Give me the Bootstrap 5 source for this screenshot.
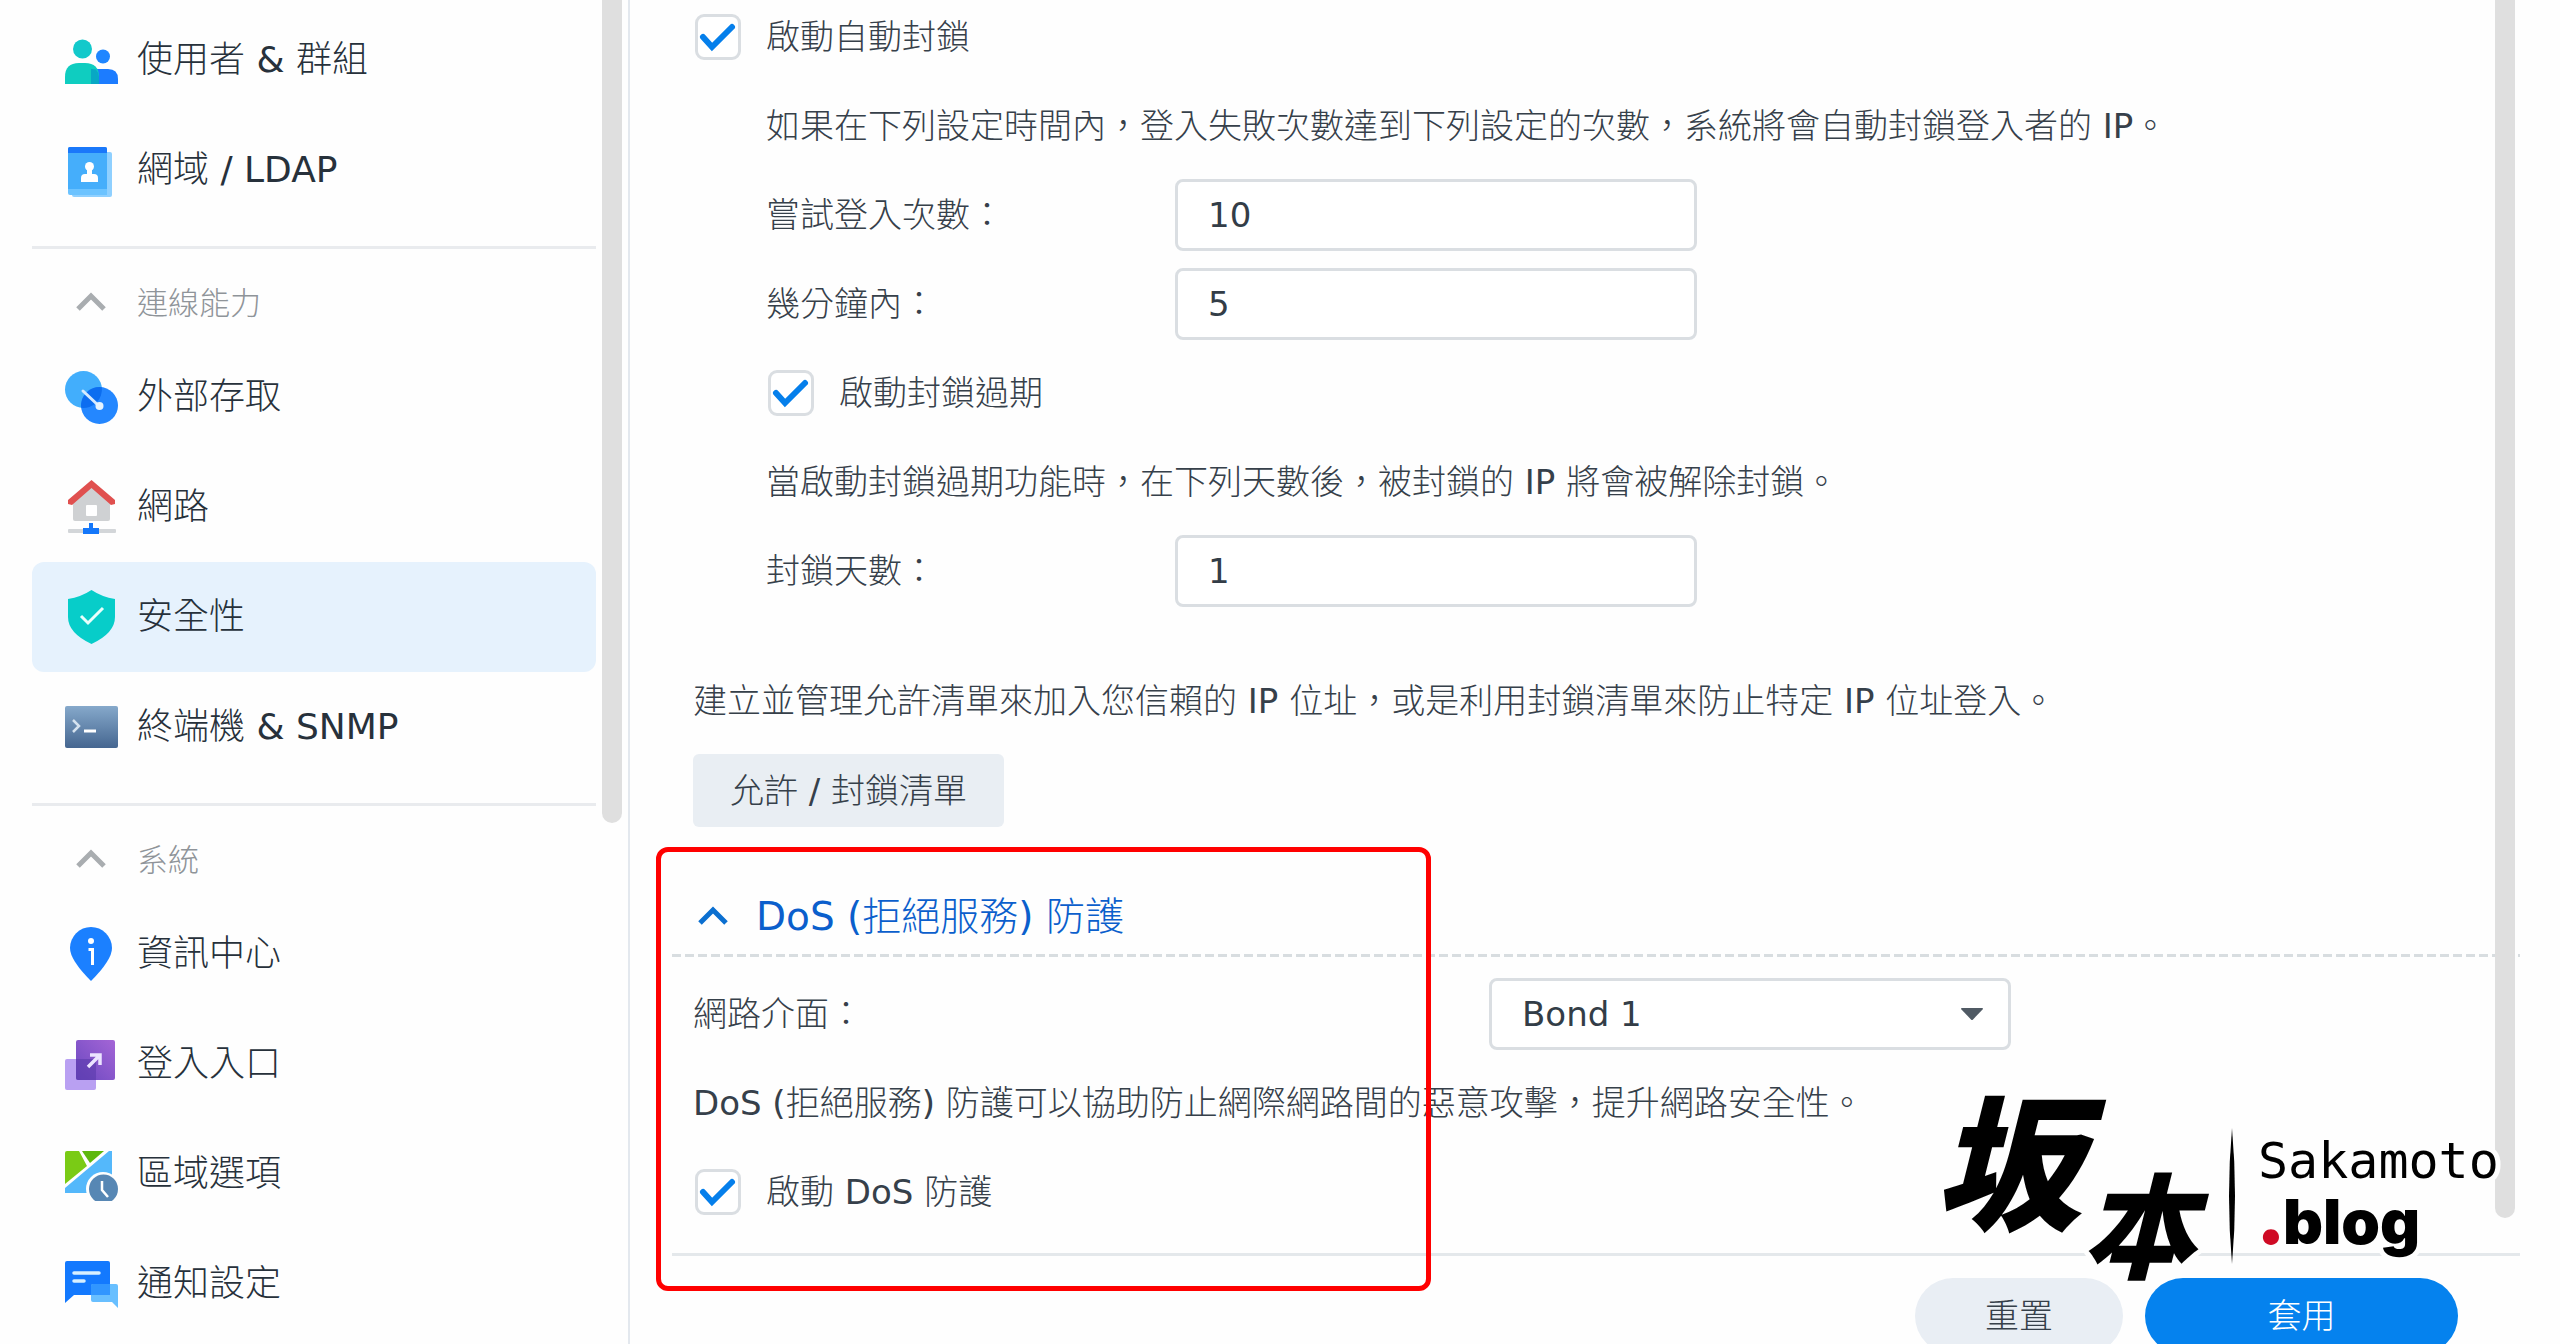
<!DOCTYPE html>
<html lang="zh-Hant">
<head>
<meta charset="utf-8">
<meta name="viewport" content="width=device-width, initial-scale=1">
<title>控制台 - 安全性</title>
<link href="https://cdn.jsdelivr.net/npm/bootstrap@5.3.0/dist/css/bootstrap.min.css" rel="stylesheet">
<style>
  body { font-family: "DejaVu Sans", "Noto Sans CJK TC", sans-serif; font-size: 34px; line-height: 48px; color: #36404a; background: #fefefe; }
  .cjk-light, .cjk-light button { font-weight: 300; }

  /* sidebar */
  .side { width: 630px; border-right: 2px solid #e3e8ee; padding: 5px 32px 0; }
  .side-link { height: 110px; padding-left: 32px; gap: 19px; border-radius: 12px; color: #27313b; font-size: 36px; text-decoration: none; }
  .side-link svg { width: 54px; height: 54px; flex: none; }
  .side-link.active { background: #e6f2fd; }
  .side-sep { height: 3px; margin: 21px 0 0; background: #e9ebee; }
  .side-group { height: 93px; padding: 14px 0 0 32px; gap: 19px; font-size: 31px; color: #8f9499; background: none; border: 0; }
  .side-group svg { width: 54px; height: 54px; flex: none; }
  .thumb { background: #dfdfdf; width: 20px; top: 0; }
  .thumb-side { right: 6px; height: 823px; border-radius: 0 0 10px 10px; }
  .thumb-main { right: 45px; height: 1218px; border-radius: 0 0 10px 10px; }

  /* settings pane */
  .pane { padding: 1px 40px 0 42px; }
  .block-pad { padding-left: 21px; }
  .indent { padding-left: 73px; }
  .stack { gap: 17px; }
  .line { height: 72px; gap: 25px; }
  .line-label { width: 409px; }
  .line-label-wide { width: 796px; }
  .field { width: 522px; height: 72px; border: 3px solid #dadee2; border-radius: 8px; padding: 0 30px; font-size: 34px; font-weight: 400; color: #333d47; background-color: #fff; }
  .field-select { appearance: none; background: #fff url("data:image/svg+xml,%3Csvg xmlns='http://www.w3.org/2000/svg' viewBox='0 0 22 12'%3E%3Cpath d='M1 0h20a1 1 0 0 1 .6 1.6L12 11.400a1.400 1.400 0 0 1-2 0L.4 1.600A1 1 0 0 1 1 0z' fill='%23505a64'/%3E%3C/svg%3E") no-repeat right 25px center / 22px 12px; }
  .tick { appearance: none; width: 46px; height: 46px; flex: none; margin: 0 0 0 2px; border: 3px solid #dadee2; border-radius: 9px; background: #fff; }
  .tick:checked { background: #fff url("data:image/svg+xml,%3Csvg xmlns='http://www.w3.org/2000/svg' viewBox='0 0 40 40'%3E%3Cpath d='M5 20l9 10L34 10' fill='none' stroke='%23057feb' stroke-width='6' stroke-linecap='round'/%3E%3C/svg%3E") center / 40px 40px no-repeat; }
  .list-row { margin-top: 58px; }
  .btn-list { height: 73px; padding: 0 37px; border: 0; border-radius: 6px; background: #e9eef3; color: #36404a; font-size: 34px; }
  .dos-part { margin-top: 53px; }
  .dos-body { padding-top: 21px; padding-bottom: 25px; }
  .dos-head { height: 74px; gap: 26px; padding: 0 0 0 24px; border: 0; background: none; color: #0b5fcc; font-size: 39px; }
  .dash-rule { height: 3px; background: repeating-linear-gradient(90deg, #d8dde0 0 9px, transparent 9px 13px); }
  .marker-box { left: -16px; top: -33px; bottom: -38px; width: 775px; border: 5px solid #f00; border-radius: 12px; pointer-events: none; }
  .foot { border-top: 3px solid #e4e8eb; padding: 22px 62px 0 0; gap: 22px; }
  .pill { height: 76px; border: 0; border-radius: 38px; font-size: 34px; }
  .pill-reset { width: 208px; background: #e9eef4; color: #36404a; }
  .pill-apply { width: 313px; background: #0582ee; color: #fff; }

  /* watermark */
  .stamp { right: 30px; bottom: 0; width: 600px; height: 344px; pointer-events: none; }
  .stamp text { paint-order: stroke; stroke: #fefefe; stroke-width: 10px; stroke-linejoin: round; }
</style>
<script src="https://cdn.jsdelivr.net/npm/bootstrap@5.3.0/dist/js/bootstrap.bundle.min.js"></script>
</head>
<body class="cjk-light vh-100 overflow-hidden position-relative d-flex">

<nav class="side position-relative flex-shrink-0 vh-100 overflow-hidden">
  <a href="#" class="side-link d-flex align-items-center">
    <svg viewBox="0 0 54 54"><circle cx="39" cy="23.500" r="7" fill="#1f86ff"/><path d="M26 51V41q0-5 6-5h12q10 0 10 10v5z" fill="#1c7cff"/><circle cx="18.500" cy="16" r="9.500" fill="#12c9cb"/><path d="M1 51v-7q0-14 14-14h6q14 0 14 14v7z" fill="#0fcdc0"/><path d="M27 51V36q3 0 5 .5 3 3.500 3 7.500v7z" fill="#08a8c4"/></svg>
    <span>使用者 <span class="fw-normal">&amp;</span> 群組</span></a>
  <a href="#" class="side-link d-flex align-items-center">
    <svg viewBox="0 0 54 54"><rect x="8" y="9" width="40" height="45" rx="2" fill="#8fd0ff"/><rect x="4" y="4" width="39" height="46" rx="2" fill="#45aefb"/><path d="M4 46h39v6H6a2 2 0 0 1-2-2z" fill="#6cc3ff"/><path d="M6 4h35a2 2 0 0 1 2 2v4H4V6a2 2 0 0 1 2-2z" fill="#1a78fa"/><circle cx="25.500" cy="23.500" r="4.500" fill="#fff"/><path d="M23 26h5v5h2q4 0 4 4v4H17v-4q0-4 4-4h2z" fill="#fff"/></svg>
    <span>網域 <span class="fw-normal">/ LDAP</span></span></a>

  <div class="side-sep"></div>
  <button type="button" class="side-group d-flex align-items-center w-100"><svg viewBox="0 0 54 54"><path d="M14 33l13-13 13 13" fill="none" stroke="#a9adb0" stroke-width="5"/></svg><span>連線能力</span></button>

  <a href="#" class="side-link d-flex align-items-center">
    <svg viewBox="0 0 54 54"><circle cx="19.500" cy="19.500" r="18.500" fill="#42aefc"/><circle cx="35.500" cy="35.500" r="18.500" fill="#2487ff"/><path d="M17.200 37.800A18.500 18.500 0 0 1 37.800 17.200 18.500 18.500 0 0 1 17.200 37.800z" fill="#0c6df0"/><path d="M19 21l16 15" stroke="#d6eaff" stroke-width="3" stroke-linecap="round"/><circle cx="35.500" cy="36" r="4" fill="#e6f3ff"/></svg>
    <span>外部存取</span></a>
  <a href="#" class="side-link d-flex align-items-center">
    <svg viewBox="0 0 54 54"><path d="M9 18L27 3l19 15v21q0 2-2 2H11q-2 0-2-2z" fill="#cfd1d3"/><path d="M4 20L27.500 0 51 20v4l-4 1L27.500 8 8 25l-4-1z" fill="#e0504f"/><rect x="22" y="25" width="11" height="11" rx="1" fill="#fff"/><rect x="4" y="49" width="48" height="4" rx="1" fill="#d3d6d9"/><path d="M25 43h4v5h6v6H19v-6h6z" fill="#1477fa"/></svg>
    <span>網路</span></a>
  <a href="#" class="side-link active d-flex align-items-center" aria-current="page">
    <svg viewBox="0 0 54 54"><path d="M27.500 0Q38 7 51 9v18q0 16-23.500 27Q4 43 4 27V9q13-2 23.500-9z" fill="#07cdc9"/><path d="M17 26l7 7 15-15" fill="none" stroke="#e8fffc" stroke-width="3"/></svg>
    <span>安全性</span></a>
  <a href="#" class="side-link d-flex align-items-center">
    <svg viewBox="0 0 54 54"><defs><linearGradient id="gTerm" x2="0" y2="1"><stop stop-color="#86a9cb"/><stop offset="1" stop-color="#456690"/></linearGradient></defs><rect x="1" y="6" width="53" height="42" rx="2" fill="url(#gTerm)"/><path d="M9 20l6 6-6 6" fill="none" stroke="#d5e2ef" stroke-width="2.500"/><path d="M20 31h12" stroke="#fff" stroke-width="3"/></svg>
    <span>終端機 <span class="fw-normal">&amp; SNMP</span></span></a>

  <div class="side-sep"></div>
  <button type="button" class="side-group d-flex align-items-center w-100"><svg viewBox="0 0 54 54"><path d="M14 33l13-13 13 13" fill="none" stroke="#a9adb0" stroke-width="5"/></svg><span>系統</span></button>

  <a href="#" class="side-link d-flex align-items-center">
    <svg viewBox="0 0 54 54"><path d="M27 54Q6 33 6 21a21 21 0 0 1 42 0q0 12-21 33z" fill="#1b80ff"/><circle cx="27" cy="14" r="3" fill="#fff"/><path d="M24.500 22.500h4V38" fill="none" stroke="#fff" stroke-width="3"/></svg>
    <span>資訊中心</span></a>
  <a href="#" class="side-link d-flex align-items-center">
    <svg viewBox="0 0 54 54"><defs><linearGradient id="gPort" x1="1" x2="0" y2="1"><stop stop-color="#a465d6"/><stop offset="1" stop-color="#6a48c0"/></linearGradient></defs><rect x="1" y="22" width="31" height="31" rx="2" fill="#b9a0f2"/><rect x="12" y="3" width="39" height="40" rx="2" fill="url(#gPort)"/><path d="M12 22h20v21H14a2 2 0 0 1-2-2z" fill="#5a3aac" opacity=".6"/><path d="M24 30l12-12M26 18h10v10" fill="none" stroke="#ece4ff" stroke-width="3.500"/></svg>
    <span>登入入口</span></a>
  <a href="#" class="side-link d-flex align-items-center">
    <svg viewBox="0 0 54 54"><path d="M3 4h12l8 15L1 37V6a2 2 0 0 1 2-2z" fill="#7acb15"/><path d="M18 4h22L26 16z" fill="#5db80e"/><path d="M48 4v42H1v-5L45 4z" fill="#54b8fb"/><circle cx="39" cy="42" r="17" fill="#fefefe"/><circle cx="39.500" cy="42" r="14.500" fill="#5787b4"/><path d="M38 34v9l6 7" fill="none" stroke="#fff" stroke-width="2.500"/></svg>
    <span>區域選項</span></a>
  <a href="#" class="side-link d-flex align-items-center">
    <svg viewBox="0 0 54 54"><path d="M3 4h41q2 0 2 2v32H10l-9 8V6q0-2 2-2z" fill="#1379fe"/><path d="M29 27h23q2 0 2 2v22l-6-6H29q-2 0-2-2V29q0-2 2-2z" fill="#68bfff"/><path d="M27 29q0-2 2-2h17v11H27z" fill="#3196ff"/><path d="M10 16h25M10 24h10" stroke="#d8f0ff" stroke-width="3.500" stroke-linecap="round"/></svg>
    <span>通知設定</span></a>
  <div class="thumb thumb-side position-absolute"></div>
</nav>

<main class="pane flex-grow-1 position-relative">
  <section class="block-pad">
    <div class="stack d-flex flex-column">
      <label class="line d-flex align-items-center"><input class="tick" type="checkbox" checked>啟動自動封鎖</label>
      <div class="indent stack d-flex flex-column">
        <div class="line d-flex align-items-center"><span>如果在下列設定時間內，登入失敗次數達到下列設定的次數，系統將會自動封鎖登入者的 <span class="fw-normal">IP</span>。</span></div>
        <div class="line d-flex align-items-center gap-0"><label class="line-label" for="tries">嘗試登入次數：</label><input class="field" id="tries" type="text" value="10"></div>
        <div class="line d-flex align-items-center gap-0"><label class="line-label" for="mins">幾分鐘內：</label><input class="field" id="mins" type="text" value="5"></div>
        <label class="line d-flex align-items-center"><input class="tick" type="checkbox" checked>啟動封鎖過期</label>
        <div class="line d-flex align-items-center"><span>當啟動封鎖過期功能時，在下列天數後，被封鎖的 <span class="fw-normal">IP</span> 將會被解除封鎖。</span></div>
        <div class="line d-flex align-items-center gap-0"><label class="line-label" for="days">封鎖天數：</label><input class="field" id="days" type="text" value="1"></div>
      </div>
    </div>
    <div class="list-row stack d-flex flex-column align-items-start">
      <div class="line d-flex align-items-center"><span>建立並管理允許清單來加入您信賴的 <span class="fw-normal">IP</span> 位址，或是利用封鎖清單來防止特定 <span class="fw-normal">IP</span> 位址登入。</span></div>
      <button type="button" class="btn-list">允許 <span class="fw-normal">/</span> 封鎖清單</button>
    </div>
  </section>

  <section class="dos-part position-relative">
    <button type="button" class="dos-head d-flex align-items-center"><svg width="34" height="34" viewBox="0 0 34 34"><path d="M4 23l13-13 13 13" fill="none" stroke="#0b6fd0" stroke-width="5"/></svg><span><span class="fw-normal">DoS (</span>拒絕服務<span class="fw-normal">)</span> 防護</span></button>
    <div class="dash-rule"></div>
    <div class="dos-body block-pad stack d-flex flex-column">
      <div class="line d-flex align-items-center gap-0"><label class="line-label-wide" for="nic">網路介面：</label><select class="field field-select" id="nic"><option>Bond 1</option></select></div>
      <div class="line d-flex align-items-center"><span><span class="fw-normal">DoS (</span>拒絕服務<span class="fw-normal">)</span> 防護可以協助防止網際網路間的惡意攻擊，提升網路安全性。</span></div>
      <label class="line d-flex align-items-center"><input class="tick" type="checkbox" checked><span>啟動 <span class="fw-normal">DoS</span> 防護</span></label>
    </div>
    <div class="marker-box position-absolute"></div>
  </section>

  <div class="foot d-flex justify-content-end">
    <button type="button" class="pill pill-reset">重置</button>
    <button type="button" class="pill pill-apply">套用</button>
  </div>
  <div class="thumb thumb-main position-absolute"></div>
</main>

<svg class="stamp position-absolute" viewBox="0 -80 600 344">
  <text font-family="'Noto Sans CJK JP', sans-serif" font-weight="900" font-style="italic"><tspan x="4" y="140" font-size="148">坂</tspan><tspan x="152" y="190" font-size="114">本</tspan></text>
  <path d="M302 48q6 68 0 136-6-68 0-136z" fill="#000"/>
  <text x="328" y="98" font-family="'DejaVu Sans Mono', monospace" font-size="50" font-weight="400">Sakamoto</text>
  <text x="326" y="164" font-family="Inter, sans-serif" font-size="62" font-weight="900"><tspan fill="#cf0a24" font-size="80">.</tspan><tspan x="353">blog</tspan></text>
</svg>
</body>
</html>
